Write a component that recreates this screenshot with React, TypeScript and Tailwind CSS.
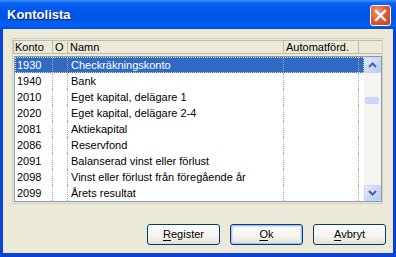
import React from "react";

const rows: [string, string][] = [
  ["1930", "Checkräkningskonto"],
  ["1940", "Bank"],
  ["2010", "Eget kapital, delägare 1"],
  ["2020", "Eget kapital, delägare 2-4"],
  ["2081", "Aktiekapital"],
  ["2086", "Reservfond"],
  ["2091", "Balanserad vinst eller förlust"],
  ["2098", "Vinst eller förlust från föregående år"],
  ["2099", "Årets resultat"],
];

function XpButton({ label, u, def }: { label: string; u: number; def?: boolean }) {
  return (
    <button
      className={
        "w-[73px] h-[21px] rounded-[3px] border border-[#003C74] bg-[linear-gradient(180deg,#FFFFFF_0%,#F4F3EE_60%,#E3E1D5_100%)] text-[11px] text-black flex items-center justify-center leading-none " +
        (def ? "shadow-[inset_0_0_0_1px_#A9C3EE,inset_0_0_0_2px_#CEE0FB]" : "")
      }
    >
      <span>
        {label.slice(0, u)}
        <span className="underline underline-offset-[2px]">{label[u]}</span>
        {label.slice(u + 1)}
      </span>
    </button>
  );
}

function Chevron({ up }: { up?: boolean }) {
  return (
    <svg width="9" height="6" viewBox="0 0 9 6">
      <path
        d={up ? "M1 5 L4.5 1.5 L8 5" : "M1 1 L4.5 4.5 L8 1"}
        stroke="#4D6185"
        strokeWidth="2"
        fill="none"
      />
    </svg>
  );
}

export default function App() {
  return (
    <div
      className="w-[396px] h-[257px] flex flex-col bg-[#0842D9]"
      style={{ fontFamily: '"Liberation Sans", Arial, sans-serif' }}
    >
      <div className="h-[29px] relative shrink-0 flex items-center pl-[7px] pt-[1px] bg-[linear-gradient(180deg,#3D95FF_0%,#0A63F0_10%,#0058EE_35%,#0054E3_60%,#0060F8_88%,#0049D6_100%)]">
        <span className="text-white font-bold text-[13px] [text-shadow:1px_1px_0_#0A1E8C]">
          Kontolista
        </span>
        <div className="absolute left-[370px] top-[5px] w-[21px] h-[21px] rounded-[3px] border border-white bg-[radial-gradient(circle_at_35%_30%,#F09A80_0%,#E25A38_45%,#C73A18_100%)] flex items-center justify-center">
          <svg width="13" height="13" viewBox="0 0 13 13">
            <path d="M2 2 L11 11 M11 2 L2 11" stroke="white" strokeWidth="2.4" strokeLinecap="square" />
          </svg>
        </div>
      </div>
      <div className="flex-1 flex flex-col bg-[#ECE9D8] border-x-[3px] border-b-[4px] border-[#0842D9] pl-[9px] pt-[9px] pr-[7px]">
        <div className="w-[371px] h-[166px] border border-[#D3CFBE] flex flex-col text-[11px] text-black">
          <div className="mt-[1px] h-[14px] flex border-y border-l border-[#C0BCAC] leading-[12px] bg-[#ECE9D8]">
            <div className="w-[39px] border-r border-[#C0BCAC] pl-[1px]">Konto</div>
            <div className="w-[15px] border-r border-[#C0BCAC] pl-[2px]">O</div>
            <div className="w-[216px] border-r border-[#C0BCAC] pl-[2px]">Namn</div>
            <div className="w-[75px] border-r border-[#C0BCAC] pl-[2px]">Automatförd.</div>
          </div>
          <div className="mt-[2px] ml-[1px] w-[368px] h-[146px] border border-[#7F9DB9] bg-white flex">
            <div className="w-[349px] flex flex-col">
              {rows.map(([k, n], i) => {
                const sel = i === 0;
                return (
                  <div
                    key={k}
                    className={
                      "h-[16px] flex leading-[16px] " +
                      (sel
                        ? "bg-[#316AC5] text-white outline-1 outline-dotted outline-[#E2D8A0] -outline-offset-1"
                        : "")
                    }
                  >
                    <div className="w-[38px] border-r border-dotted border-[#A8A8A8] pl-[2px]">{k}</div>
                    <div className="w-[15px] border-r border-dotted border-[#A8A8A8]"></div>
                    <div className="w-[216px] border-r border-dotted border-[#A8A8A8] pl-[3px] whitespace-nowrap">
                      {n}
                    </div>
                    <div className="w-[75px] border-r border-dotted border-[#A8A8A8]"></div>
                  </div>
                );
              })}
            </div>
            <div className="w-[17px] flex flex-col bg-[#F6F5EF]">
              <div className="h-[16px] rounded-[2px] border border-[#C3D3FD] bg-[linear-gradient(135deg,#E2EBFE_0%,#C6D6FC_60%,#B4C8F8_100%)] flex items-center justify-center">
                <Chevron up />
              </div>
              <div className="flex-1 relative">
                <div className="absolute left-[1px] top-[24px] w-[14px] h-[7px] rounded-[2px] border border-[#C3D3FD] bg-[#C8D7FB]"></div>
              </div>
              <div className="h-[16px] rounded-[2px] border border-[#C3D3FD] bg-[linear-gradient(135deg,#E2EBFE_0%,#C6D6FC_60%,#B4C8F8_100%)] flex items-center justify-center">
                <Chevron />
              </div>
            </div>
          </div>
        </div>
        <div className="mt-[20px] flex justify-end gap-[10px]">
          <XpButton label="Register" u={0} />
          <XpButton label="Ok" u={0} def />
          <XpButton label="Avbryt" u={0} />
        </div>
      </div>
    </div>
  );
}
